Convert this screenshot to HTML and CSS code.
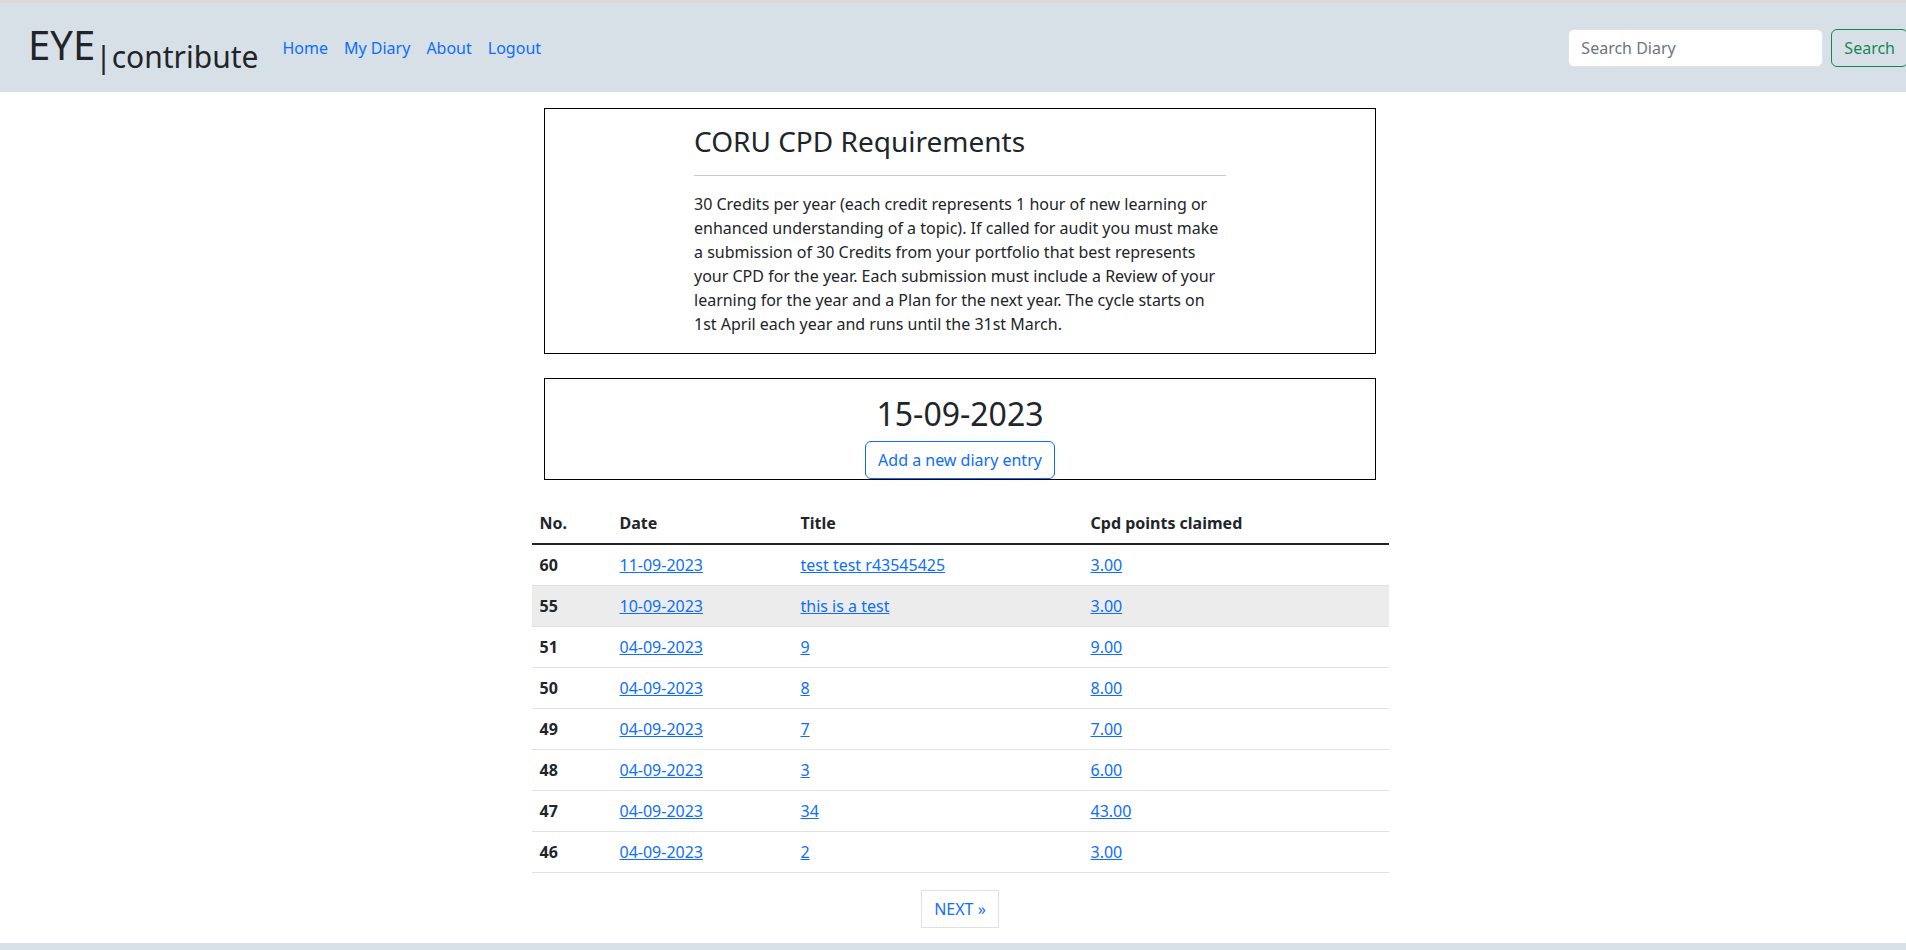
FILE: index.html
```html
<!DOCTYPE html>
<html lang="en">
<head>
<meta charset="utf-8">
<title>EYE contribute - My Diary</title>
<link rel="stylesheet" href="styles.css">
</head>
<body>
<div class="page">
  <header class="navbar">
    <a class="brand" href="#"><span class="brand-main">EYE</span><span class="brand-sub">|contribute</span></a>
    <ul class="nav">
      <li><a href="#">Home</a></li>
      <li><a href="#">My Diary</a></li>
      <li><a href="#">About</a></li>
      <li><a href="#">Logout</a></li>
    </ul>
    <form class="search">
      <input class="search-input" type="search" placeholder="Search Diary">
      <button class="search-btn" type="button">Search</button>
    </form>
  </header>

  <main class="main">
    <section class="card card-req">
      <div class="req-col">
        <h3 class="req-title">CORU CPD Requirements</h3>
        <hr class="req-rule">
        <p class="req-text">30 Credits per year (each credit represents 1 hour of new learning or enhanced understanding of a topic). If called for audit you must make a submission of 30 Credits from your portfolio that best represents your CPD for the year. Each submission must include a Review of your learning for the year and a Plan for the next year. The cycle starts on 1st April each year and runs until the 31st March.</p>
      </div>
    </section>

    <section class="card card-date">
      <h2 class="today">15-09-2023</h2>
      <a class="btn-add" href="#">Add a new diary entry</a>
    </section>

    <table class="diary">
      <colgroup>
        <col class="c-no"><col class="c-date"><col class="c-title"><col class="c-cpd">
      </colgroup>
      <thead>
        <tr><th>No.</th><th>Date</th><th>Title</th><th>Cpd points claimed</th></tr>
      </thead>
      <tbody>
        <tr><th>60</th><td><a href="#">11-09-2023</a></td><td><a href="#">test test r43545425</a></td><td><a href="#">3.00</a></td></tr>
        <tr class="hover"><th>55</th><td><a href="#">10-09-2023</a></td><td><a href="#">this is a test</a></td><td><a href="#">3.00</a></td></tr>
        <tr><th>51</th><td><a href="#">04-09-2023</a></td><td><a href="#">9</a></td><td><a href="#">9.00</a></td></tr>
        <tr><th>50</th><td><a href="#">04-09-2023</a></td><td><a href="#">8</a></td><td><a href="#">8.00</a></td></tr>
        <tr><th>49</th><td><a href="#">04-09-2023</a></td><td><a href="#">7</a></td><td><a href="#">7.00</a></td></tr>
        <tr><th>48</th><td><a href="#">04-09-2023</a></td><td><a href="#">3</a></td><td><a href="#">6.00</a></td></tr>
        <tr><th>47</th><td><a href="#">04-09-2023</a></td><td><a href="#">34</a></td><td><a href="#">43.00</a></td></tr>
        <tr><th>46</th><td><a href="#">04-09-2023</a></td><td><a href="#">2</a></td><td><a href="#">3.00</a></td></tr>
      </tbody>
    </table>

    <nav class="pager"><a class="page-link" href="#">NEXT »</a></nav>
  </main>

  <footer class="footer">Made by Dan Tomney</footer>
</div>
</body>
</html>
```

FILE: styles.css
```css
html {
  overflow-x: hidden;
}
body {
  margin: 0;
  font-family: "Noto Sans", "Open Sans", sans-serif;
  font-size: 16px;
  line-height: 1.5;
  color: #212529;
  background: #fff;
}
a {
  color: #0d6efd;
}
.page {
  width: 1920px;
  border-top: 3px solid #d9d9d9;
}

/* navbar */
.navbar {
  height: 89px;
  box-sizing: border-box;
  background: #d8e0e7;
  display: flex;
  align-items: center;
  padding: 0 12px 0 28px;
}
.brand {
  color: #212529;
  text-decoration: none;
  margin-right: 16px;
  white-space: nowrap;
  line-height: 1.2;
}
.brand-main {
  font-size: 40px;
}
.brand-sub {
  font-size: 30px;
  vertical-align: -8px;
}
.nav {
  list-style: none;
  margin: 0;
  padding: 0;
  display: flex;
}
.nav a {
  display: block;
  padding: 8px;
  text-decoration: none;
}
.search {
  margin-left: auto;
  display: flex;
  align-items: center;
}
.search-input {
  width: 255px;
  height: 38px;
  box-sizing: border-box;
  padding: 6px 12px;
  border: 1px solid #dee2e6;
  border-radius: 6px;
  font: inherit;
  color: #212529;
  background: #fff;
  margin-right: 8px;
  outline: none;
}
.search-input::placeholder {
  color: #6c757d;
}
.search-btn {
  height: 38px;
  padding: 6px 12px;
  border: 1px solid #198754;
  border-radius: 6px;
  background: transparent;
  color: #198754;
  font: inherit;
}

/* main */
.main {
  display: flex;
  flex-direction: column;
  align-items: center;
  padding-top: 16px;
}
.card {
  width: 832px;
  box-sizing: border-box;
  border: 1px solid #000;
}
.card-req {
  padding: 16px 0 17px;
}
.req-col {
  width: 532px;
  margin: 0 auto;
}
.req-title {
  margin: 0;
  font-size: 28px;
  font-weight: 400;
  line-height: 1.2;
}
.req-rule {
  margin: 16px 0;
  border: 0;
  border-top: 1px solid #c6c8ca;
}
.req-text {
  margin: 0;
}
.card-date {
  margin-top: 24px;
  padding-top: 16px;
  display: flex;
  flex-direction: column;
  align-items: center;
}
.today {
  margin: 0 0 8px;
  font-size: 32px;
  font-weight: 400;
  line-height: 1.2;
}
.btn-add {
  display: block;
  padding: 6px 12px;
  border: 1px solid #0d6efd;
  border-radius: 6px;
  text-decoration: none;
}

/* table */
.diary {
  margin-top: 23px;
  width: 857px;
  border-collapse: collapse;
  table-layout: fixed;
}
.c-no { width: 80px; }
.c-date { width: 181px; }
.c-title { width: 290px; }
.c-cpd { width: 306px; }
.diary th,
.diary td {
  text-align: left;
  padding: 8px;
  border-bottom: 1px solid #dee2e6;
  font-weight: 400;
}
.diary th {
  font-weight: 700;
}
.diary thead th {
  border-bottom: 2px solid #212529;
}
.diary tr.hover {
  background: #ececec;
}

/* pager */
.pager {
  margin-top: 17px;
  display: flex;
  justify-content: center;
}
.page-link {
  display: block;
  padding: 6px 12px;
  border: 1px solid #dee2e6;
  text-decoration: none;
}

/* footer */
.footer {
  margin-top: 15px;
  background: #d8e0e7;
  text-align: center;
  padding: 2px 0 16px;
}
```
